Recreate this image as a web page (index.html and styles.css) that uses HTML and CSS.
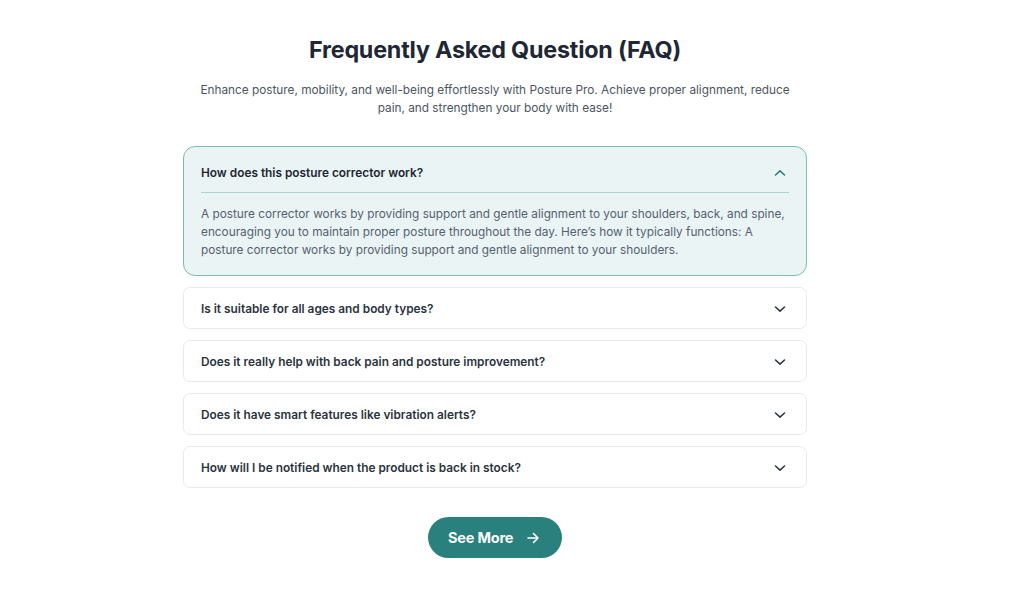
FILE: index.html
```html
<!DOCTYPE html>
<html lang="en">
<head>
<meta charset="utf-8">
<title>FAQ</title>
<link rel="stylesheet" href="styles.css">
</head>
<body>
<main class="page">
  <section class="faq">
    <h1 class="title">Frequently Asked Question (FAQ)</h1>
    <p class="subtitle">Enhance posture, mobility, and well-being effortlessly with Posture Pro. Achieve proper alignment, reduce pain, and strengthen your body with ease!</p>
    <div class="list">
      <div class="item open">
        <div class="q">
          <span>How does this posture corrector work?</span>
          <svg class="chev up" width="12" height="8" viewBox="0 0 12 8"><path d="M1.5 6 L6 1.8 L10.5 6" fill="none" stroke="currentColor" stroke-width="1.6" stroke-linecap="round" stroke-linejoin="round"/></svg>
        </div>
        <div class="a">A posture corrector works by providing support and gentle alignment to your shoulders, back, and spine, encouraging you to maintain proper posture throughout the day. Here’s how it typically functions: A posture corrector works by providing support and gentle alignment to your shoulders.</div>
      </div>
      <div class="item">
        <div class="q">
          <span>Is it suitable for all ages and body types?</span>
          <svg class="chev" width="12" height="8" viewBox="0 0 12 8"><path d="M1.5 2 L6 6.2 L10.5 2" fill="none" stroke="currentColor" stroke-width="1.6" stroke-linecap="round" stroke-linejoin="round"/></svg>
        </div>
      </div>
      <div class="item">
        <div class="q">
          <span>Does it really help with back pain and posture improvement?</span>
          <svg class="chev" width="12" height="8" viewBox="0 0 12 8"><path d="M1.5 2 L6 6.2 L10.5 2" fill="none" stroke="currentColor" stroke-width="1.6" stroke-linecap="round" stroke-linejoin="round"/></svg>
        </div>
      </div>
      <div class="item">
        <div class="q">
          <span>Does it have smart features like vibration alerts?</span>
          <svg class="chev" width="12" height="8" viewBox="0 0 12 8"><path d="M1.5 2 L6 6.2 L10.5 2" fill="none" stroke="currentColor" stroke-width="1.6" stroke-linecap="round" stroke-linejoin="round"/></svg>
        </div>
      </div>
      <div class="item">
        <div class="q">
          <span>How will I be notified when the product is back in stock?</span>
          <svg class="chev" width="12" height="8" viewBox="0 0 12 8"><path d="M1.5 2 L6 6.2 L10.5 2" fill="none" stroke="currentColor" stroke-width="1.6" stroke-linecap="round" stroke-linejoin="round"/></svg>
        </div>
      </div>
    </div>
    <button class="more" type="button">See More
      <svg width="14" height="14" viewBox="0 0 14 14"><path d="M2 7 H12 M7.5 2.5 L12 7 L7.5 11.5" fill="none" stroke="currentColor" stroke-width="1.6" stroke-linecap="round" stroke-linejoin="round"/></svg>
    </button>
  </section>
</main>
</body>
</html>
```

FILE: styles.css
```css
* { box-sizing: border-box; }
html, body { margin: 0; padding: 0; background: #ffffff; }
body {
  font-family: Inter, "Noto Sans", Arial, sans-serif;
  color: #1f2937;
}
.page {
  display: flex;
  justify-content: center;
  padding: 35px 38px 0 0;
}
.faq {
  width: 624px;
  display: flex;
  flex-direction: column;
  align-items: center;
}
.title {
  margin: 0;
  font-size: 23.3px;
  line-height: 30px;
  font-weight: 700;
  color: #1e2733;
  letter-spacing: -0.2px;
}
.subtitle {
  margin: 16px 0 0;
  width: 594px;
  text-align: center;
  font-size: 11.8px;
  line-height: 18px;
  color: #4b5563;
}
.list {
  margin-top: 29px;
  width: 100%;
  display: flex;
  flex-direction: column;
  gap: 11px;
}
.item {
  border: 1px solid #e8eaee;
  border-radius: 7px;
  background: #fff;
  padding: 0 17px;
}
.item.open {
  background: #eaf4f4;
  border-color: #7fbab6;
  border-radius: 12px;
  padding-bottom: 16px;
}
.q {
  height: 40px;
  padding-top: 1px;
  display: flex;
  align-items: center;
  justify-content: space-between;
  font-size: 11.85px;
  font-weight: 600;
  color: #2a3340;
}
.item.open .q {
  height: 46px;
  padding-top: 6px;
  border-bottom: 1px solid #a9d6d3;
  color: #1e2733;
}
.chev { color: #2f3742; margin-right: 3px; }
.chev.up { color: #2a817c; }
.a {
  padding-top: 12px;
  font-size: 11.8px;
  line-height: 18px;
  color: #556170;
}
.more {
  margin-top: 29px;
  width: 134px;
  height: 41px;
  border: none;
  border-radius: 21px;
  background: #2a807c;
  color: #fff;
  font-family: inherit;
  font-size: 14.5px;
  font-weight: 700;
  display: flex;
  align-items: center;
  justify-content: flex-start;
  gap: 13px;
  padding: 0 0 0 20px;
  letter-spacing: -0.2px;
}
```
